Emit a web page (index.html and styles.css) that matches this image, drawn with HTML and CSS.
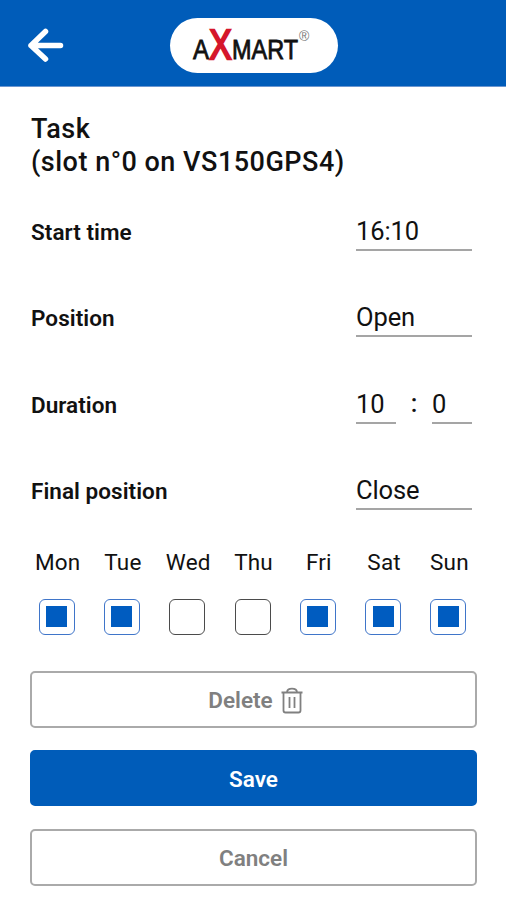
FILE: index.html
```html
<!DOCTYPE html>
<html lang="en">
<head>
<meta charset="utf-8">
<title>Task</title>
<link rel="stylesheet" href="styles.css">
</head>
<body>
<header class="bar">
  <svg class="back" width="38" height="36" viewBox="0 0 38 36"><path d="M33.500 18.500H4M18.500 4.500L4 18.500L18.500 32" /></svg>
  <div class="logo">
    <svg width="168" height="55" viewBox="0 0 168 55">
      <text class="mark" x="23" y="41" font-size="27" textLength="16" lengthAdjust="spacingAndGlyphs">A</text>
      <text class="mark" x="62" y="41" font-size="27" textLength="66" lengthAdjust="spacingAndGlyphs">MART</text>
      <text class="mark cross" x="39.500" y="41" font-size="43" textLength="22" lengthAdjust="spacingAndGlyphs">X</text>
      <text class="reg" x="129" y="23" font-size="14">®</text>
    </svg>
  </div>
</header>
<main>
  <h1>Task<br>(slot n°0 on VS150GPS4)</h1>
  <section class="fields">
    <div class="row"><label>Start time</label><div class="value">16:10</div></div>
    <div class="row"><label>Position</label><div class="value">Open</div></div>
    <div class="row"><label>Duration</label><div class="pair"><div class="value">10</div><b>:</b><div class="value">0</div></div></div>
    <div class="row"><label>Final position</label><div class="value">Close</div></div>
  </section>
  <section class="days">
    <div class="day on"><span>Mon</span><i></i></div>
    <div class="day on"><span>Tue</span><i></i></div>
    <div class="day"><span>Wed</span><i></i></div>
    <div class="day"><span>Thu</span><i></i></div>
    <div class="day on"><span>Fri</span><i></i></div>
    <div class="day on"><span>Sat</span><i></i></div>
    <div class="day on"><span>Sun</span><i></i></div>
  </section>
  <section class="actions">
    <button class="delete"><span>Delete</span><svg width="22" height="27" viewBox="0 0 22 27"><path d="M0.500 5.500H21.500M2.500 5.500V23.500Q2.500 25.500 4.500 25.500H17.500Q19.500 25.500 19.500 23.500V5.500M6 5C6.500 0.500 15.500 0.500 16 5M8.500 10V21M13.500 10V21"/></svg></button>
    <button class="save">Save</button>
    <button>Cancel</button>
  </section>
</main>
</body>
</html>
```
FILE: styles.css
```css
* { box-sizing: border-box; }
body { margin: 0; height: 900px; overflow: hidden; background: #fff; color: #111; font-family: Roboto, sans-serif; }
.bar { height: 87px; padding: 18px 0 0 27px; display: flex; background: #005cb9; border-bottom: 1px solid #6b96d0; }
.back { margin-top: 9px; fill: none; stroke: #fff; stroke-width: 5.5; stroke-linecap: round; stroke-linejoin: round; }
.logo { width: 168px; height: 55px; margin-left: 105px; border-radius: 28px; background: #fff; }
.logo svg { display: block; }
.mark { font-family: "Liberation Sans", sans-serif; fill: #111; stroke: #111; stroke-width: 0.8; }
.cross { fill: #d5172b; stroke: #d5172b; stroke-width: 2.5; }
.reg { font-family: "Liberation Sans", sans-serif; fill: #777; }
main { padding: 26px 29px 0 31px; }
h1 { margin: 0; font-size: 27px; line-height: 33px; font-weight: 500; letter-spacing: 0.5px; white-space: nowrap; }
.fields { margin-top: 29px; }
.row { height: 86.4px; padding-right: 5px; display: flex; justify-content: space-between; align-items: flex-start; }
label { font-size: 22.5px; line-height: 26px; margin-top: 11px; font-weight: 600; letter-spacing: 0.05px; }
.value { width: 116px; height: 43px; padding-top: 8px; line-height: 30px; font-size: 25.5px; letter-spacing: -0.1px; border-bottom: 2px solid #a5a5a5; white-space: nowrap; }
.pair { width: 116px; display: flex; justify-content: space-between; }
.pair .value { width: 40px; }
.pair b { padding-top: 8px; line-height: 30px; font-size: 25px; font-weight: 500; }
.days { display: flex; width: 458px; margin-left: -7px; margin-top: -5px; }
.day { width: 65.300px; display: flex; flex-direction: column; align-items: center; font-size: 22.5px; line-height: 26px; letter-spacing: 0.2px; }
.day span { position: relative; left: 1px; }
.day i { width: 36px; height: 36px; margin-top: 24px; border: 1.500px solid #4b4b4b; border-radius: 6px; display: grid; place-items: center; }
.day.on i { border-color: #3f75c9; }
.day.on i::after { content: ""; width: 21px; height: 21px; background: #005cc0; }
.actions { margin: 36px 0 0 -1px; display: grid; gap: 22px; }
button { height: 57px; padding: 2px 0 0; display: flex; align-items: center; justify-content: center; gap: 8px; background: #fff; border: 2px solid #aaa; border-radius: 5px; color: #808080; font: 600 22.5px/26px Roboto, sans-serif; letter-spacing: 0; }
.delete { padding-left: 4px; }
button svg { fill: none; stroke: #808080; stroke-width: 1.8; }
.save { height: 56px; margin-bottom: 1px; background: #005cb9; border-color: #005cb9; color: #fff; }
```
